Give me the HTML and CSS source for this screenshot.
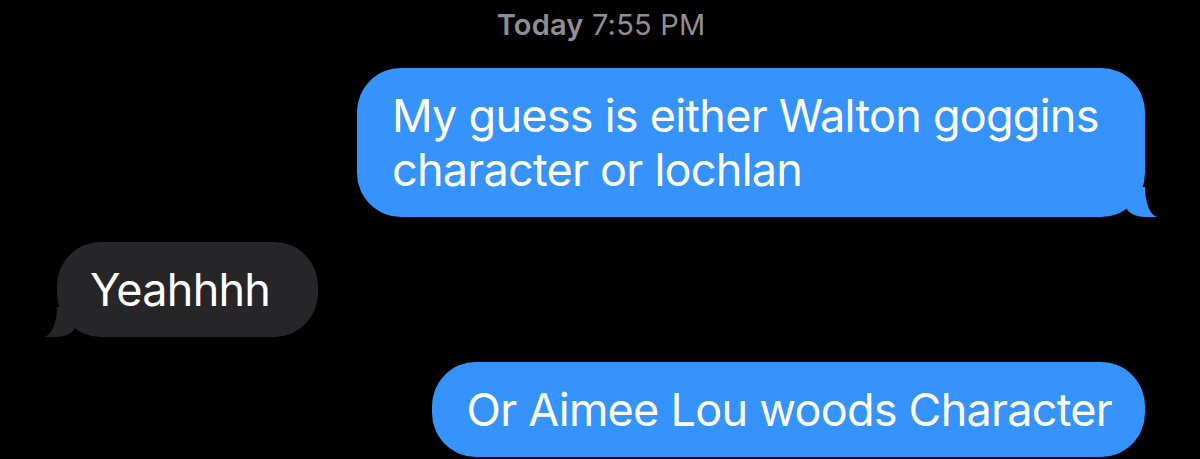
FILE: index.html
```html
<!DOCTYPE html>
<html lang="en">
<head>
    <meta charset="UTF-8">
    <meta name="viewport" content="width=device-width, initial-scale=1.0">
    <title>Messages</title>
    <link rel="stylesheet" href="styles.css">
</head>
<body>
    <div class="thread">
        <div class="timestamp"><span class="day">Today</span> 7:55 PM</div>

        <div class="bubble sent tail">My guess is either Walton goggins character or lochlan</div>
        <div class="bubble received tail">Yeahhhh</div>
        <div class="bubble sent">Or Aimee Lou woods Character</div>
    </div>
</body>
</html>
```

FILE: styles.css
```css
body {
    margin: 0;
    padding: 0;
    background-color: #000;
    font-family: 'Inter', 'Noto Sans', sans-serif;
    height: 100vh;
    overflow: hidden;
}
.thread {
    display: flex;
    flex-direction: column;
    padding: 8px 55px 0 57px;
}
.timestamp {
    align-self: center;
    color: #8e8e93;
    font-size: 29px;
    line-height: 34px;
    letter-spacing: 0.2px;
    margin-bottom: 26px;
}
.timestamp .day {
    font-weight: 600;
}
.bubble {
    position: relative;
    max-width: 788px;
    box-sizing: border-box;
    padding: 21px 33px 20px 35px;
    border-radius: 44px;
    color: #fff;
    font-size: 45px;
    line-height: 54px;
    letter-spacing: -0.75px;
}
.bubble + .bubble {
    margin-top: 25px;
}
.sent {
    align-self: flex-end;
    background-color: #3693fc;
}
.received {
    align-self: flex-start;
    background-color: #262628;
    padding: 21px 48px 20px 33px;
}

/* rabinho do balão */
.tail::before,
.tail::after {
    content: "";
    position: absolute;
    bottom: 0;
    height: 30px;
}
.sent.tail::before {
    right: -13px;
    width: 32px;
    background-color: #3693fc;
    border-bottom-left-radius: 20px 11px;
}
.sent.tail::after {
    left: 100%;
    width: 30px;
    background-color: #000;
    border-bottom-left-radius: 13px 30px;
}
.received.tail::before {
    left: -14px;
    width: 32px;
    background-color: #262628;
    border-bottom-right-radius: 20px 11px;
}
.received.tail::after {
    right: 100%;
    width: 30px;
    background-color: #000;
    border-bottom-right-radius: 14px 30px;
}
```
